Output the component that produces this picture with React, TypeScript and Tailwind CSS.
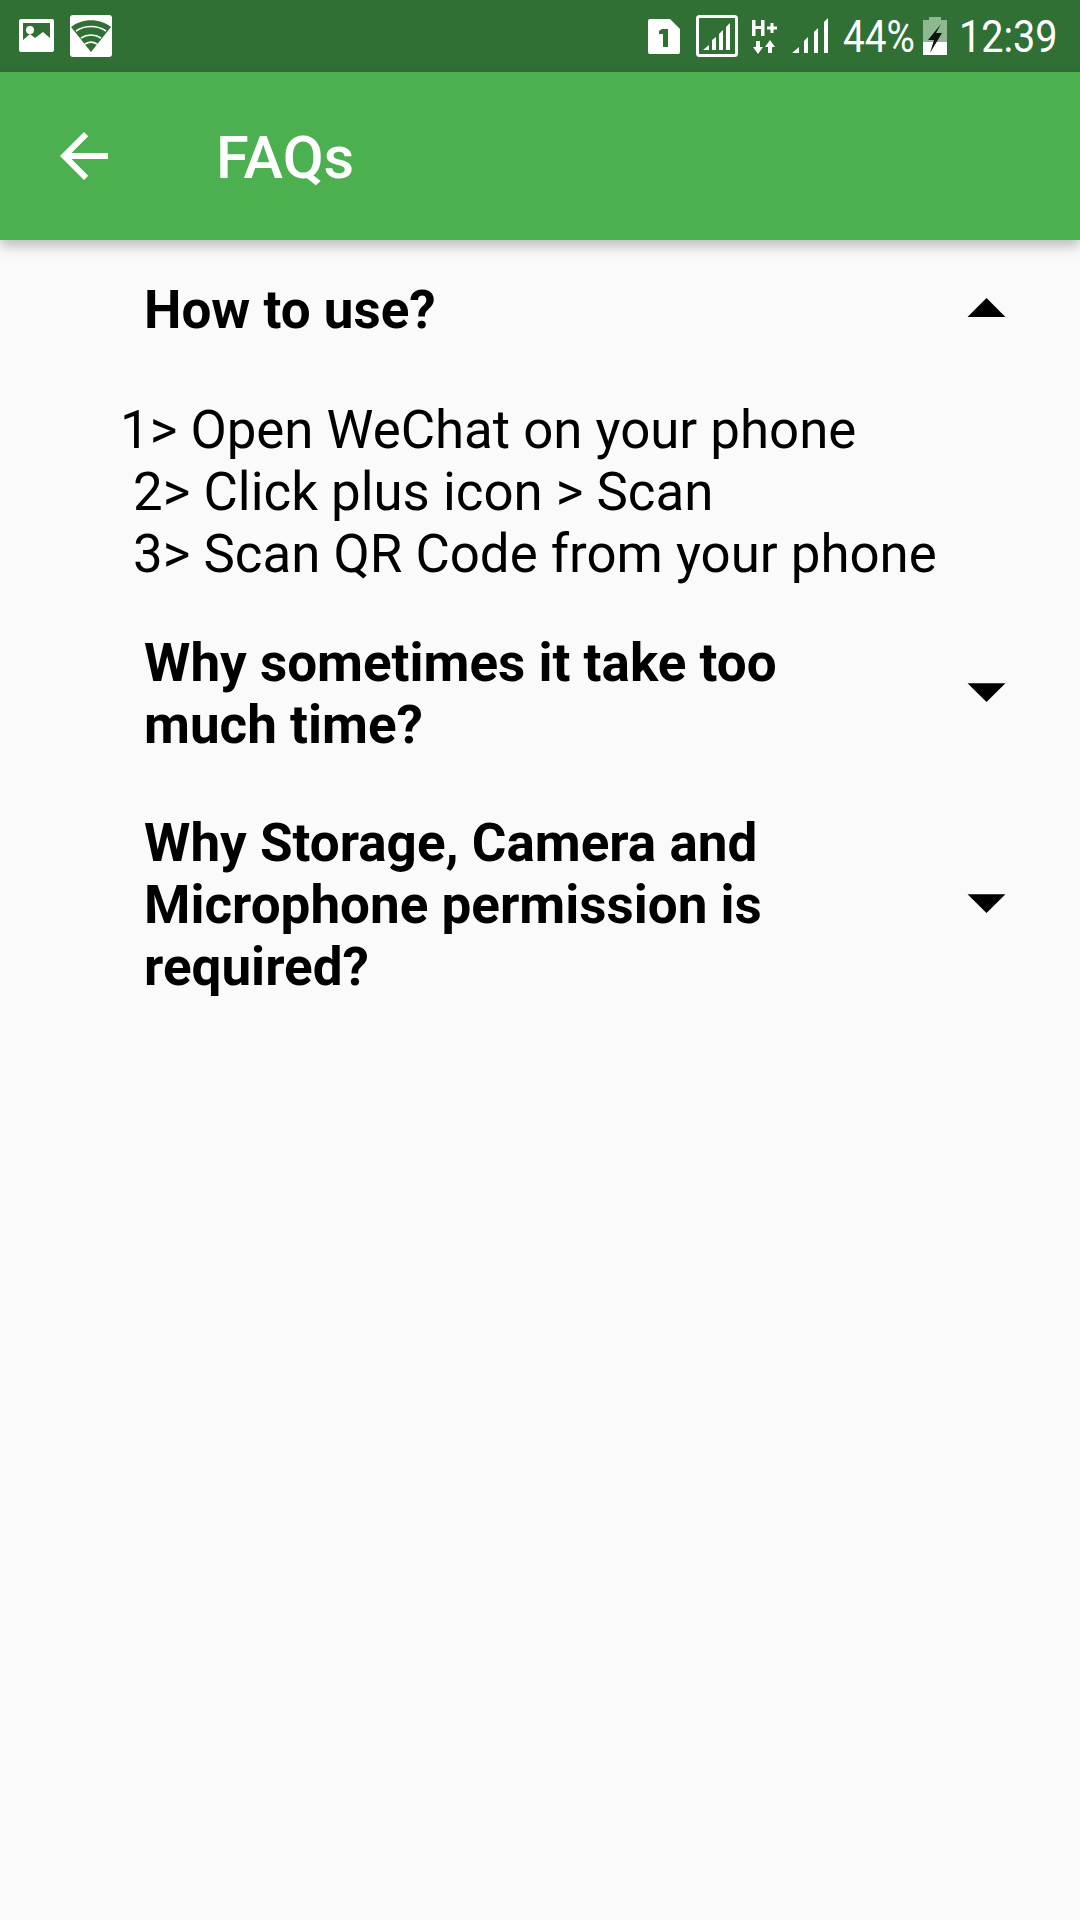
import React from 'react';

const faqs = [
  {
    title: 'How to use?',
    open: true,
    body: '1> Open WeChat on your phone\n 2> Click plus icon > Scan\n 3> Scan QR Code from your phone',
  },
  { title: 'Why sometimes it take too much time?', open: false, body: '' },
  { title: 'Why Storage, Camera and Microphone permission is required?', open: false, body: '' },
];

function StatusBar() {
  return (
    <div className="flex h-[72px] items-center bg-[#317034] pl-[19px] pr-[25px]">
      {/* gallery notification */}
      <svg className="h-[34px] w-[36px]" viewBox="0 0 36 34">
        <rect x="0" y="0" width="35" height="33" rx="2" fill="#fff" />
        <rect x="4" y="4" width="27" height="25" fill="#317034" />
        <circle cx="11" cy="11" r="4" fill="#fff" />
        <path d="M4 21l7-6 5 4 8-6 7 6v11H4z" fill="#fff" />
      </svg>
      {/* wifi box */}
      <svg className="ml-[15px] h-[42px] w-[42px]" viewBox="0 0 42 42">
        <rect width="42" height="42" rx="3" fill="#fff" />
        <path d="M1 12C12 3 30 3 41 12L21 37z" fill="#317034" />
        <path d="M6 16c9-6 21-6 30 0M11 23c6-4 14-4 20 0" stroke="#fff" strokeWidth="1.6" fill="none" />
        <path d="M15 29c4-2.500 8-2.500 12 0" stroke="#fff" strokeWidth="1.6" fill="none" />
      </svg>
      <div className="flex-1" />
      {/* sim 1 */}
      <svg className="h-[35px] w-[32px]" viewBox="0 0 32 35">
        <path d="M2 0h20l10 10v23a2 2 0 01-2 2H2a2 2 0 01-2-2V2a2 2 0 012-2z" fill="#fff" />
        <path d="M14 10h6v18h-5V15h-4v-3z" fill="#317034" />
      </svg>
      {/* signal in a box */}
      <svg className="ml-[16px] h-[42px] w-[42px]" viewBox="0 0 42 42">
        <rect x="1.500" y="1.500" width="39" height="39" rx="2" fill="none" stroke="#fff" strokeWidth="3" />
        <path d="M7 35l6-5v5zM16 35v-10l4-3v13zM23 35V19l4-4v20zM30 35V12l4-4v27z" fill="#fff" />
      </svg>
      {/* H+ with data arrows */}
      <svg className="ml-[14px] h-[36px] w-[25px]" viewBox="0 0 25 36">
        <path d="M0 2h3.500v6H9V2h3.500v16H9v-7H3.500v7H0z" fill="#fff" />
        <path d="M15 8.500h3.500V5h3v3.500H25v3h-3.500V15h-3v-3.500H15z" fill="#fff" />
        <path d="M4 23h4v6h3l-5 7-5-7h3z" fill="#fff" />
        <path d="M19 36h-4v-6h-3l5-7 5 7h-3z" fill="#fff" transform="translate(1 -1)" />
      </svg>
      {/* signal */}
      <svg className="ml-[15px] h-[36px] w-[36px]" viewBox="0 0 36 36">
        <path d="M0 35l7-6v6zM12 35V23l4-4v16zM22 35V14l4-4v25zM32 35V4l4-4v35z" fill="#fff" />
      </svg>
      <div className="ml-[15px] w-[70px] whitespace-nowrap text-[45px] leading-none text-white font-['Roboto',sans-serif]">
        <span className="inline-block origin-left scale-x-[0.86]">44%</span>
      </div>
      {/* battery charging */}
      <svg className="ml-[10px] h-[38px] w-[24px]" viewBox="0 0 24 38">
        <path d="M6 0h12v3h6v35H0V3h6z" fill="#8db890" />
        <path d="M0 25h24v13H0z" fill="#fff" />
        <path d="M18 7L5 23h6L7 36l12-20h-6z" fill="#111" />
      </svg>
      <div className="ml-[12px] w-[96px] whitespace-nowrap text-[45px] leading-none text-white font-['Roboto',sans-serif]">
        <span className="inline-block origin-left scale-x-[0.88]">12:39</span>
      </div>
    </div>
  );
}

function AppBar() {
  return (
    <div className="relative z-10 flex h-[168px] items-center bg-[#4caf50] pl-[48px] shadow-[0_6px_12px_rgba(0,0,0,0.25)]">
      <svg className="h-[72px] w-[72px]" viewBox="0 0 24 24" fill="#fff">
        <path d="M20 11H7.830l5.590-5.590L12 4l-8 8 8 8 1.410-1.410L7.830 13H20v-2z" />
      </svg>
      <h1 className="ml-[96px] pt-[5px] text-[59.5px] font-medium leading-none text-white">FAQs</h1>
    </div>
  );
}

export default function App() {
  return (
    <div className="flex min-h-[1920px] w-[1080px] flex-col bg-[#fafafa] font-['Roboto',sans-serif] text-black">
      <StatusBar />
      <AppBar />
      <div className="pt-[11px]">
        {faqs.map((faq) => (
          <div key={faq.title}>
            <div className="flex items-center pl-[144px] pr-[48px] py-[28px]">
              <div className="flex-1 pr-[60px] text-[53px] font-bold leading-[62px]">{faq.title}</div>
              <svg className="h-[91px] w-[91px] -my-[20px]" viewBox="0 0 24 24" fill="#000">
                {faq.open ? <path d="M7 13.700l5-5 5 5z" /> : <path d="M7 9l5 5 5-5z" />}
              </svg>
            </div>
            {faq.open && (
              <div className="whitespace-pre pl-[120px] pt-[30px] pb-[19px] text-[52.8px] leading-[62px]">{faq.body}</div>
            )}
          </div>
        ))}
      </div>
    </div>
  );
}
